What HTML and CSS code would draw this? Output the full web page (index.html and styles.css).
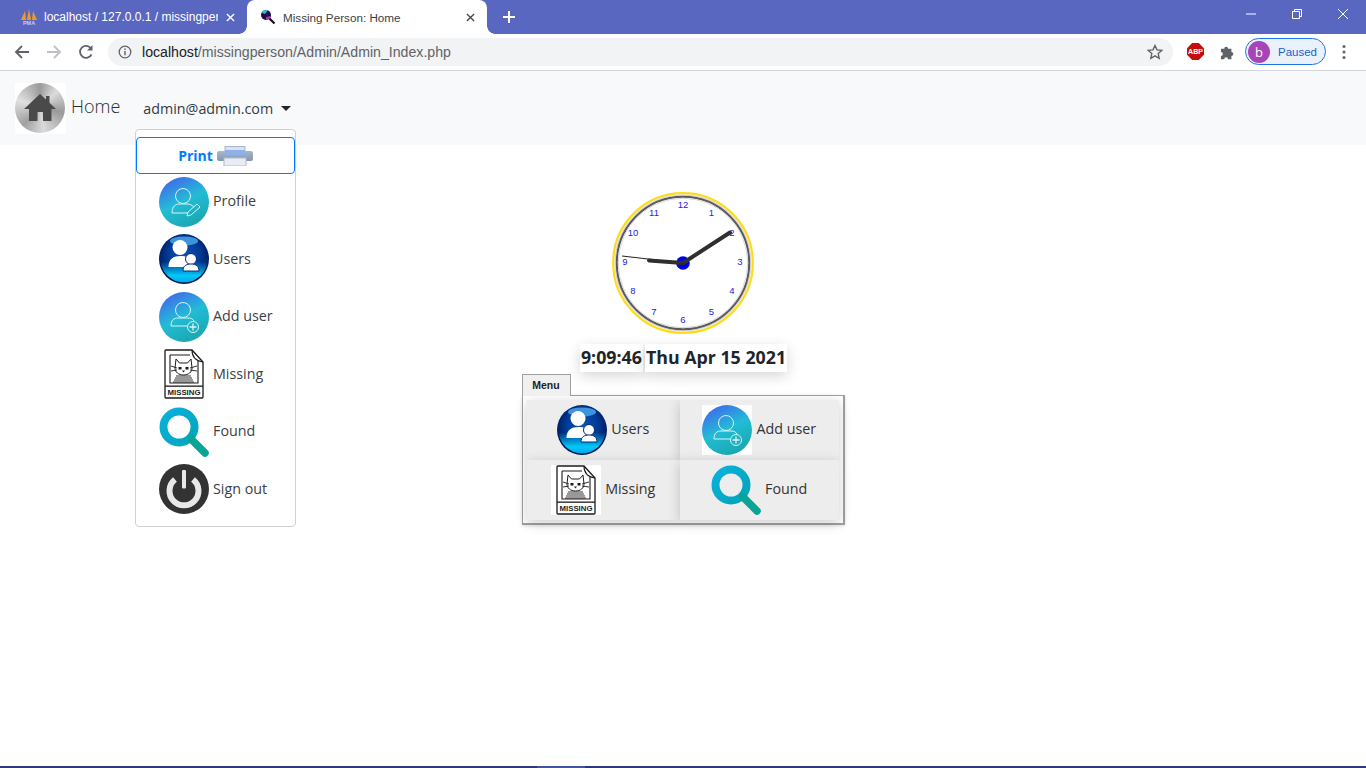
FILE: index.html
```html
<!DOCTYPE html>
<html lang="en">
<head>
<meta charset="utf-8">
<title>Missing Person: Home</title>
<link rel="stylesheet" href="styles.css">
</head>
<body>
<svg class="defs" aria-hidden="true">
  <defs>
    <linearGradient id="gBlue" x1="0.2" y1="0" x2="0.7" y2="1">
      <stop offset="0" stop-color="#4264ee"/><stop offset="0.5" stop-color="#22bcd6"/><stop offset="1" stop-color="#1aa6ad"/>
    </linearGradient>
    <radialGradient id="gUsers" cx="0.5" cy="0.42" r="0.58">
      <stop offset="0" stop-color="#0a55b5"/><stop offset="0.55" stop-color="#023a96"/><stop offset="0.85" stop-color="#011f66"/><stop offset="1" stop-color="#010f40"/>
    </radialGradient>
    <linearGradient id="gGlow" x1="0" y1="0" x2="0" y2="1">
      <stop offset="0" stop-color="#00c8f8" stop-opacity="0"/><stop offset="0.55" stop-color="#00c8f8" stop-opacity="0"/><stop offset="0.85" stop-color="#00c8f8"/><stop offset="1" stop-color="#00a8ee"/>
    </linearGradient>
    <linearGradient id="gFound" x1="0" y1="0" x2="1" y2="1">
      <stop offset="0" stop-color="#0ab0dc"/><stop offset="1" stop-color="#03a5b8"/>
    </linearGradient>
    <linearGradient id="gPrint" x1="0" y1="0" x2="0" y2="1">
      <stop offset="0" stop-color="#a9b8cc"/><stop offset="1" stop-color="#8397b0"/>
    </linearGradient>
    <symbol id="iProfile" viewBox="0 0 50 50">
      <circle cx="25" cy="25" r="25" fill="url(#gBlue)"/>
      <g fill="none" stroke="#d8f4f6" stroke-width="1">
        <circle cx="24" cy="19" r="7.500"/>
        <path d="M13 36c0-7 4-9 7-9h8c3 0 5 1 7 3M13 36h16"/>
        <path d="M28 39l1-4 9-8 3 3-9 8z"/>
      </g>
    </symbol>
    <symbol id="iUsers" viewBox="0 0 50 50">
      <circle cx="25" cy="25" r="25" fill="url(#gUsers)"/>
      <circle cx="25" cy="25" r="23.500" fill="url(#gGlow)"/>
      <ellipse cx="25" cy="7" rx="14" ry="4.500" fill="#3d93dc"/>
      <circle cx="21" cy="13.500" r="7.500" fill="#fff"/>
      <path d="M9.500 33c0-8 5-11 12-11 6 0 9 1.500 10.500 4.500-3 2-4 4-4.500 6.500z" fill="#fff"/>
      <circle cx="32" cy="25" r="5.500" fill="#fff" stroke="#022a7a" stroke-width="1"/>
      <path d="M24 37c0-5 3-7 8-7s8 2 8 7z" fill="#fff" stroke="#022a7a" stroke-width="1"/>
    </symbol>
    <symbol id="iAdd" viewBox="0 0 50 50">
      <rect width="50" height="50" fill="#fff"/>
      <circle cx="25" cy="25" r="25" fill="url(#gBlue)"/>
      <g fill="none" stroke="#d8f4f6" stroke-width="1">
        <circle cx="24" cy="18" r="7.500"/>
        <path d="M12 34c0-6 3-8 7-8h10c3 0 5 1 6 3M12 34h16"/>
        <circle cx="34" cy="35" r="5.500"/>
        <path d="M34 31.500v7M30.500 35h7" stroke-width="1.300"/>
      </g>
    </symbol>
    <symbol id="iMissing" viewBox="0 0 50 50">
      <rect width="50" height="50" fill="#fff"/>
      <path d="M7 1h26l11 12v35a1 1 0 0 1-1 1H7a1 1 0 0 1-1-1V2a1 1 0 0 1 1-1z" fill="#fff" stroke="#1c1c1c" stroke-width="1.300"/>
      <path d="M33 1c0 8 4 11 11 12" fill="none" stroke="#1c1c1c" stroke-width="1.100"/>
      <path d="M11 6v28h28V12M11 6h20" fill="none" stroke="#1c1c1c" stroke-width="1.100"/>
      <path d="M17 10l3.500 4h8l3.500-4 1 9c0 4-3.500 7-8.500 7S16 23 16 19z" fill="none" stroke="#1c1c1c" stroke-width="1"/>
      <path d="M19.500 18h3v2.500h-3zM26.500 18h3v2.500h-3zM23 21.500h3l-1.500 2z" fill="#1c1c1c"/>
      <path d="M12 17l6 2M12 22l6-1M31 19l7-2M31 21l7 1M17 27h15M16 29h17M15 31h19M14 33h21" stroke="#1c1c1c" stroke-width="0.900" fill="none"/>
      <rect x="6" y="36.500" width="38" height="1.300" fill="#1c1c1c"/>
      <text x="25" y="46" class="missing-word" text-anchor="middle">MISSING</text>
    </symbol>
    <symbol id="iFound" viewBox="0 0 50 50">
      <circle cx="20" cy="20" r="15.500" fill="none" stroke="url(#gFound)" stroke-width="8"/>
      <path d="M32 32l14 14" stroke="#08a596" stroke-width="7.500" stroke-linecap="round"/>
    </symbol>
    <symbol id="iOut" viewBox="0 0 50 50">
      <circle cx="25" cy="25" r="25" fill="#333"/>
      <path d="M16 15.500a14.500 14.500 0 1 0 18 0" fill="none" stroke="#e8e8e8" stroke-width="6" stroke-linecap="butt"/>
      <rect x="21.500" y="5" width="7" height="21" rx="2" fill="#333"/>
      <rect x="23" y="6" width="4" height="18.500" rx="1" fill="#e8e8e8"/>
    </symbol>
  </defs>
</svg>

<header class="tabstrip">
  <div class="tab">
    <svg class="favicon" viewBox="0 0 18 16"><path d="M1 11L5 2l1 9zM7 11l2-11 2 11zM12 11l1-9 4 9z" fill="#f29b1f"/><text x="9" y="16" class="pma" text-anchor="middle">PMA</text></svg>
    <span class="tab-title">localhost / 127.0.0.1 / missingper</span>
    <svg class="tab-x" viewBox="0 0 10 10"><path d="M1 1l8 8M9 1l-8 8" stroke="#fff" stroke-width="1.500"/></svg>
  </div>
  <div class="tab tab-active">
    <svg class="favicon" viewBox="0 0 16 16"><circle cx="6" cy="6" r="5" fill="#1a1240"/><path d="M2 4a5 5 0 0 1 6-3l-3 4z" fill="#2fb8d8"/><path d="M6 11a5 5 0 0 0 5-4l-5 1z" fill="#b82fa8"/><path d="M9.500 9.500l5 5" stroke="#111" stroke-width="2.200"/></svg>
    <span class="tab-title tab-title-dark">Missing Person: Home</span>
    <svg class="tab-x" viewBox="0 0 10 10"><path d="M1 1l8 8M9 1l-8 8" stroke="#45474a" stroke-width="1.500"/></svg>
  </div>
  <svg class="newtab" viewBox="0 0 12 12"><path d="M6 0v12M0 6h12" stroke="#fff" stroke-width="2"/></svg>
  <div class="win-controls">
    <svg class="win" viewBox="0 0 46 14"><path d="M18 7h10" stroke="#fff"/></svg>
    <svg class="win" viewBox="0 0 46 14"><path d="M18.500 4.500h7v7h-7zM20.500 4.500v-2h7v7h-2" fill="none" stroke="#fff"/></svg>
    <svg class="win" viewBox="0 0 46 14"><path d="M18 2l10 10M28 2L18 12" stroke="#fff"/></svg>
  </div>
</header>

<nav class="toolbar">
  <svg class="tool" viewBox="0 0 16 16"><path d="M15 8H2M8 2L2 8l6 6" fill="none" stroke="#5f6368" stroke-width="1.800"/></svg>
  <svg class="tool" viewBox="0 0 16 16"><path d="M1 8h13M8 2l6 6-6 6" fill="none" stroke="#bdc1c6" stroke-width="1.800"/></svg>
  <svg class="tool" viewBox="0 0 16 16"><path d="M13.500 10.500A6 6 0 1 1 13 4.500" fill="none" stroke="#5f6368" stroke-width="1.800"/><path d="M14.500 1v5.500H9z" fill="#5f6368"/></svg>
  <div class="omnibox">
    <svg class="info" viewBox="0 0 14 14"><circle cx="7" cy="7" r="5.800" fill="none" stroke="#5f6368" stroke-width="1.300"/><path d="M7 6v4.200M7 3.600v1.300" stroke="#5f6368" stroke-width="1.400"/></svg>
    <span class="url"><span class="url-host">localhost</span>/missingperson/Admin/Admin_Index.php</span>
    <svg class="star" viewBox="0 0 16 16"><path d="M8 1.500l2 4.400 4.800.5-3.600 3.200 1 4.700L8 11.900l-4.200 2.400 1-4.700L1.200 6.400 6 5.900z" fill="none" stroke="#5f6368" stroke-width="1.400"/></svg>
  </div>
  <div class="ext-group">
    <svg class="abp" viewBox="0 0 18 18"><path d="M5.500 0h7L18 5.500v7L12.500 18h-7L0 12.500v-7z" fill="#c70d0d"/><text x="9" y="12" class="abp-text" text-anchor="middle">ABP</text></svg>
    <svg class="puzzle" viewBox="0 0 16 16"><path d="M1 5h3.500a2 2 0 1 1 4 0H12v3.500a2 2 0 1 1 0 4V16H8.500a2 2 0 1 0-4 0H1v-3.500a2 2 0 1 0 0-4z" fill="#5f6368" transform="scale(.95)"/></svg>
    <div class="profile"><span class="avatar">b</span><span class="paused">Paused</span></div>
    <svg class="dots" viewBox="0 0 4 16"><circle cx="2" cy="2.500" r="1.500" fill="#5f6368"/><circle cx="2" cy="8" r="1.500" fill="#5f6368"/><circle cx="2" cy="13.500" r="1.500" fill="#5f6368"/></svg>
  </div>
</nav>

<div class="page">
  <div class="navbar">
    <a class="brand">
      <span class="home-tile"><span class="home-disc"><svg class="home-glyph" viewBox="0 0 50 50"><path d="M25 11L9 26h5v12h8.500V29h5.500v9h8.500V26h4.500l-6.500-6.200V13h-3.500v3.500z" fill="#4a4a4a"/></svg></span></span>
      <span class="brand-text">Home</span>
    </a>
    <button class="user-toggle">admin@admin.com<span class="caret"></span></button>
  </div>

  <main class="content">
    <svg class="clock" viewBox="0 0 142 142">
      <circle cx="71" cy="71" r="69.800" fill="#fff" stroke="#ffdc1a" stroke-width="2.200"/>
      <circle cx="71" cy="71" r="67.800" fill="none" stroke="#d6d6d6" stroke-width="1.200"/>
      <circle cx="71" cy="71" r="66.200" fill="none" stroke="#5a5a5a" stroke-width="2"/>
      <circle cx="71" cy="71" r="64.700" fill="none" stroke="#d8d8d8" stroke-width="1"/>
      <g class="clock-nums" text-anchor="middle">
        <text x="71" y="16">12</text><text x="99.500" y="23.500">1</text><text x="120" y="44">2</text>
        <text x="128" y="73">3</text><text x="120" y="102">4</text><text x="99.500" y="123">5</text>
        <text x="71" y="131">6</text><text x="42" y="123">7</text><text x="21" y="102">8</text>
        <text x="13" y="73">9</text><text x="21" y="44">10</text><text x="42" y="23.500">11</text>
      </g>
      <circle cx="71" cy="71" r="6.800" fill="#0000e6"/>
      <path d="M71 71L10 64" stroke="#222" stroke-width="1"/>
      <path d="M71 71L37 68.500M71 71L118 40.500" stroke="#2f2f2f" stroke-width="4" stroke-linecap="round"/>
    </svg>
    <div class="datetime"><span class="dt-box">9:09:46</span><span class="dt-box">Thu Apr 15 2021</span></div>
    <section class="tabs">
      <div class="tabs-head"><span class="tabs-label">Menu</span></div>
      <div class="tabs-panel">
        <a class="cell"><svg class="ic50"><use href="#iUsers"/></svg><span>Users</span></a>
        <a class="cell"><svg class="ic50"><use href="#iAdd"/></svg><span>Add user</span></a>
        <a class="cell"><svg class="ic50"><use href="#iMissing"/></svg><span>Missing</span></a>
        <a class="cell"><svg class="ic50"><use href="#iFound"/></svg><span>Found</span></a>
      </div>
    </section>
  </main>

  <div class="dropdown">
    <button class="print">Print
      <svg class="printer" viewBox="0 0 36 20"><rect x="8" y="0.500" width="20" height="7" fill="#d9e2ee" stroke="#a9b8cc"/><rect x="0" y="5" width="36" height="10" rx="2" fill="url(#gPrint)"/><rect x="8" y="4" width="20" height="5" fill="#8fb0e8"/><rect x="7" y="12" width="22" height="8" fill="#e8edf3" stroke="#b0bccb"/></svg>
    </button>
    <a class="menu-item"><svg class="ic50"><use href="#iProfile"/></svg><span>Profile</span></a>
    <a class="menu-item"><svg class="ic50"><use href="#iUsers"/></svg><span>Users</span></a>
    <a class="menu-item"><svg class="ic50"><use href="#iAdd"/></svg><span>Add user</span></a>
    <a class="menu-item"><svg class="ic50"><use href="#iMissing"/></svg><span>Missing</span></a>
    <a class="menu-item"><svg class="ic50"><use href="#iFound"/></svg><span>Found</span></a>
    <a class="menu-item"><svg class="ic50"><use href="#iOut"/></svg><span>Sign out</span></a>
  </div>
</div>
<div class="taskbar-edge"><span class="taskbar-active"></span></div>
</body>
</html>
```
FILE: styles.css
```css
* { box-sizing: border-box; }
html, body { margin: 0; height: 100%; }
body {
  display: flex;
  flex-direction: column;
  height: 768px;
  overflow: hidden;
  background: #fff;
  font-family: "Open Sans", "Noto Sans", sans-serif;
  color: #212529;
}
.defs { position: absolute; width: 0; height: 0; }

/* Browser chrome */
.tabstrip {
  display: flex;
  align-items: flex-end;
  height: 34px;
  flex: none;
  background: #5a67c0;
  padding-left: 8px;
}
.tab {
  position: relative;
  display: flex;
  align-items: center;
  width: 239px;
  height: 34px;
  padding: 0 12px;
  font-family: "Liberation Sans", sans-serif;
  font-size: 12px;
}
.tab-active {
  width: 240px;
  background: #fff;
  border-radius: 8px 8px 0 0;
  font-size: 11.700px;
}
.tab-active::before,
.tab-active::after {
  content: "";
  position: absolute;
  bottom: 0;
  width: 8px;
  height: 8px;
}
.tab-active::before { left: -8px; background: radial-gradient(circle at 0 0, #5a67c0 7.500px, #fff 8px); }
.tab-active::after { right: -8px; background: radial-gradient(circle at 100% 0, #5a67c0 7.500px, #fff 8px); }
.favicon { width: 18px; height: 16px; flex: none; margin-right: 6px; }
.pma { font: bold 5.500px "Liberation Sans", sans-serif; fill: #c9cde8; }
.tab-title { flex: 1; color: #fff; white-space: nowrap; overflow: hidden; }
.tab-title-dark { color: #3c4043; }
.tab-x { width: 9px; height: 9px; flex: none; margin-left: 8px; }
.newtab { width: 12px; height: 12px; margin: 0 0 11px 16px; flex: none; }
.win-controls { display: flex; margin-left: auto; align-self: flex-start; }
.win { width: 46px; height: 14px; margin-top: 7px; }

.toolbar {
  display: flex;
  align-items: center;
  height: 37px;
  flex: none;
  background: #fff;
  border-bottom: 1px solid #d3d5d9;
  padding: 0 0 1px 14px;
}
.tool { width: 16px; height: 16px; flex: none; margin-right: 16px; }
.omnibox {
  display: flex;
  align-items: center;
  width: 1065px;
  height: 28px;
  margin-left: -2px;
  padding: 0 10px;
  background: #f1f3f4;
  border-radius: 14px;
  font-family: "Liberation Sans", sans-serif;
  font-size: 14.150px;
}
.info { width: 14px; height: 14px; flex: none; margin-right: 10px; }
.url { flex: 1; color: #5f6368; }
.url-host { color: #202124; }
.star { width: 16px; height: 16px; flex: none; }
.ext-group { display: flex; align-items: center; }
.abp { width: 17px; height: 17px; margin-left: 14px; }
.abp-text { font: bold 7.500px "Liberation Sans", sans-serif; fill: #fff; }
.puzzle { width: 16px; height: 16px; margin-left: 16px; }
.profile {
  display: flex;
  align-items: center;
  width: 81px;
  height: 27px;
  margin-left: 9px;
  padding-left: 2px;
  border: 1px solid #1a73e8;
  border-radius: 14px;
  background: #ebf1fb;
}
.avatar {
  display: flex;
  align-items: center;
  justify-content: center;
  width: 22px;
  height: 22px;
  border-radius: 50%;
  background: #a944b8;
  color: #fff;
  font-size: 13px;
}
.paused { margin-left: 8px; font: 11.500px "Liberation Sans", sans-serif; color: #1a5fc8; }
.dots { width: 4px; height: 16px; margin-left: 16px; }

/* Page */
.page { position: relative; flex: 1; min-height: 0; }
.navbar {
  display: flex;
  align-items: flex-start;
  height: 74px;
  padding: 12px 0 0 15px;
  background: #f8f9fa;
}
.ic50 { display: block; width: 50px; height: 50px; flex: none; }
.brand { display: flex; align-items: center; height: 50px; }
.home-tile { display: block; width: 51px; height: 51px; background: #fff; }
.home-disc {
  display: block;
  width: 50px;
  height: 50px;
  border-radius: 50%;
  background:
    radial-gradient(circle, transparent 82%, rgba(120, 120, 120, 0.55) 90%, rgba(190, 190, 190, 0.7) 100%),
    conic-gradient(#9a9a9a, #dcdcdc 45deg, #999 100deg, #dadada 170deg, #a0a0a0 225deg, #e0e0e0 290deg, #9a9a9a);
}
.home-glyph { display: block; width: 50px; height: 50px; }
.brand-text { margin: 0 0 5px 5px; font-size: 18px; font-weight: 300; line-height: 30px; color: #2a2e33; }
.user-toggle {
  display: flex;
  align-items: center;
  height: 24px;
  margin: 13px 0 0 23px;
  padding: 0;
  border: 0;
  background: none;
  font: 14.300px "Open Sans", sans-serif;
  color: #343a40;
}
.caret {
  margin-left: 8px;
  border-top: 5px solid #212529;
  border-left: 5px solid transparent;
  border-right: 5px solid transparent;
}

.dropdown {
  position: absolute;
  left: 135px;
  top: 58px;
  display: flex;
  flex-direction: column;
  width: 161px;
  height: 398px;
  padding: 7px 0 0;
  background: #fff;
  border: 1px solid #d0d0d0;
  border-radius: 4px;
}
.print {
  display: flex;
  align-items: center;
  justify-content: center;
  gap: 4px;
  height: 37px;
  margin-bottom: -1px;
  padding: 0;
  background: #fff;
  border: 1px solid #007bff;
  border-radius: 4px;
  font: bold 14px "Open Sans", sans-serif;
  color: #007bff;
}
.printer { width: 36px; height: 20px; }
.menu-item {
  display: flex;
  align-items: center;
  gap: 4px;
  height: 57.500px;
  padding-left: 23px;
  font-size: 14.300px;
  color: #3a3f44;
}
.menu-item span { margin-bottom: 2px; }

.content { display: flex; flex-direction: column; align-items: center; padding-top: 47px; }
.clock { display: block; width: 142px; height: 142px; flex: none; }
.clock-nums { font: 9.500px "Liberation Sans", sans-serif; fill: #2222ee; }
.datetime { display: flex; gap: 2px; margin-top: 10px; margin-left: 1px; font-size: 17.800px; font-weight: 700; }
.dt-box {
  display: block;
  height: 28px;
  line-height: 27px;
  padding: 0 1px;
  background: #fff;
  box-shadow: 0 4px 14px rgba(0, 0, 0, 0.16);
  white-space: nowrap;
}
.tabs { width: 323px; margin-top: 2px; }
.tabs-head { display: flex; height: 21px; }
.tabs-label {
  position: relative;
  z-index: 1;
  width: 49px;
  height: 22px;
  background: #f0f0f0;
  border: 1px solid #a0a0a0;
  border-bottom: 0;
  font: bold 10.500px/21px "Liberation Sans", sans-serif;
  text-align: center;
  color: #222;
}
.tabs-panel {
  display: grid;
  grid-template-columns: 153px 1fr;
  grid-auto-rows: 60px;
  height: 130px;
  padding: 4px;
  background: #fff;
  border: 1px solid #a0a0a0;
  border-right-width: 2px;
  border-bottom-width: 2px;
  box-shadow: 0 1px 3px rgba(0, 0, 0, 0.12);
}
.cell {
  display: flex;
  align-items: center;
  justify-content: center;
  gap: 4.500px;
  background: #ededed;
  box-shadow: 0 3px 12px rgba(0, 0, 0, 0.2);
  font-size: 14.300px;
  color: #333;
}
.cell span { margin-bottom: 4px; }
.missing-word { font: bold 7.800px "Liberation Sans", sans-serif; fill: #1c1c1c; }

.taskbar-edge { position: absolute; left: 0; right: 0; bottom: 0; height: 2px; background: #2c3878; }
.taskbar-active { display: block; width: 48px; height: 2px; margin-left: 537px; background: #46549e; }
```
